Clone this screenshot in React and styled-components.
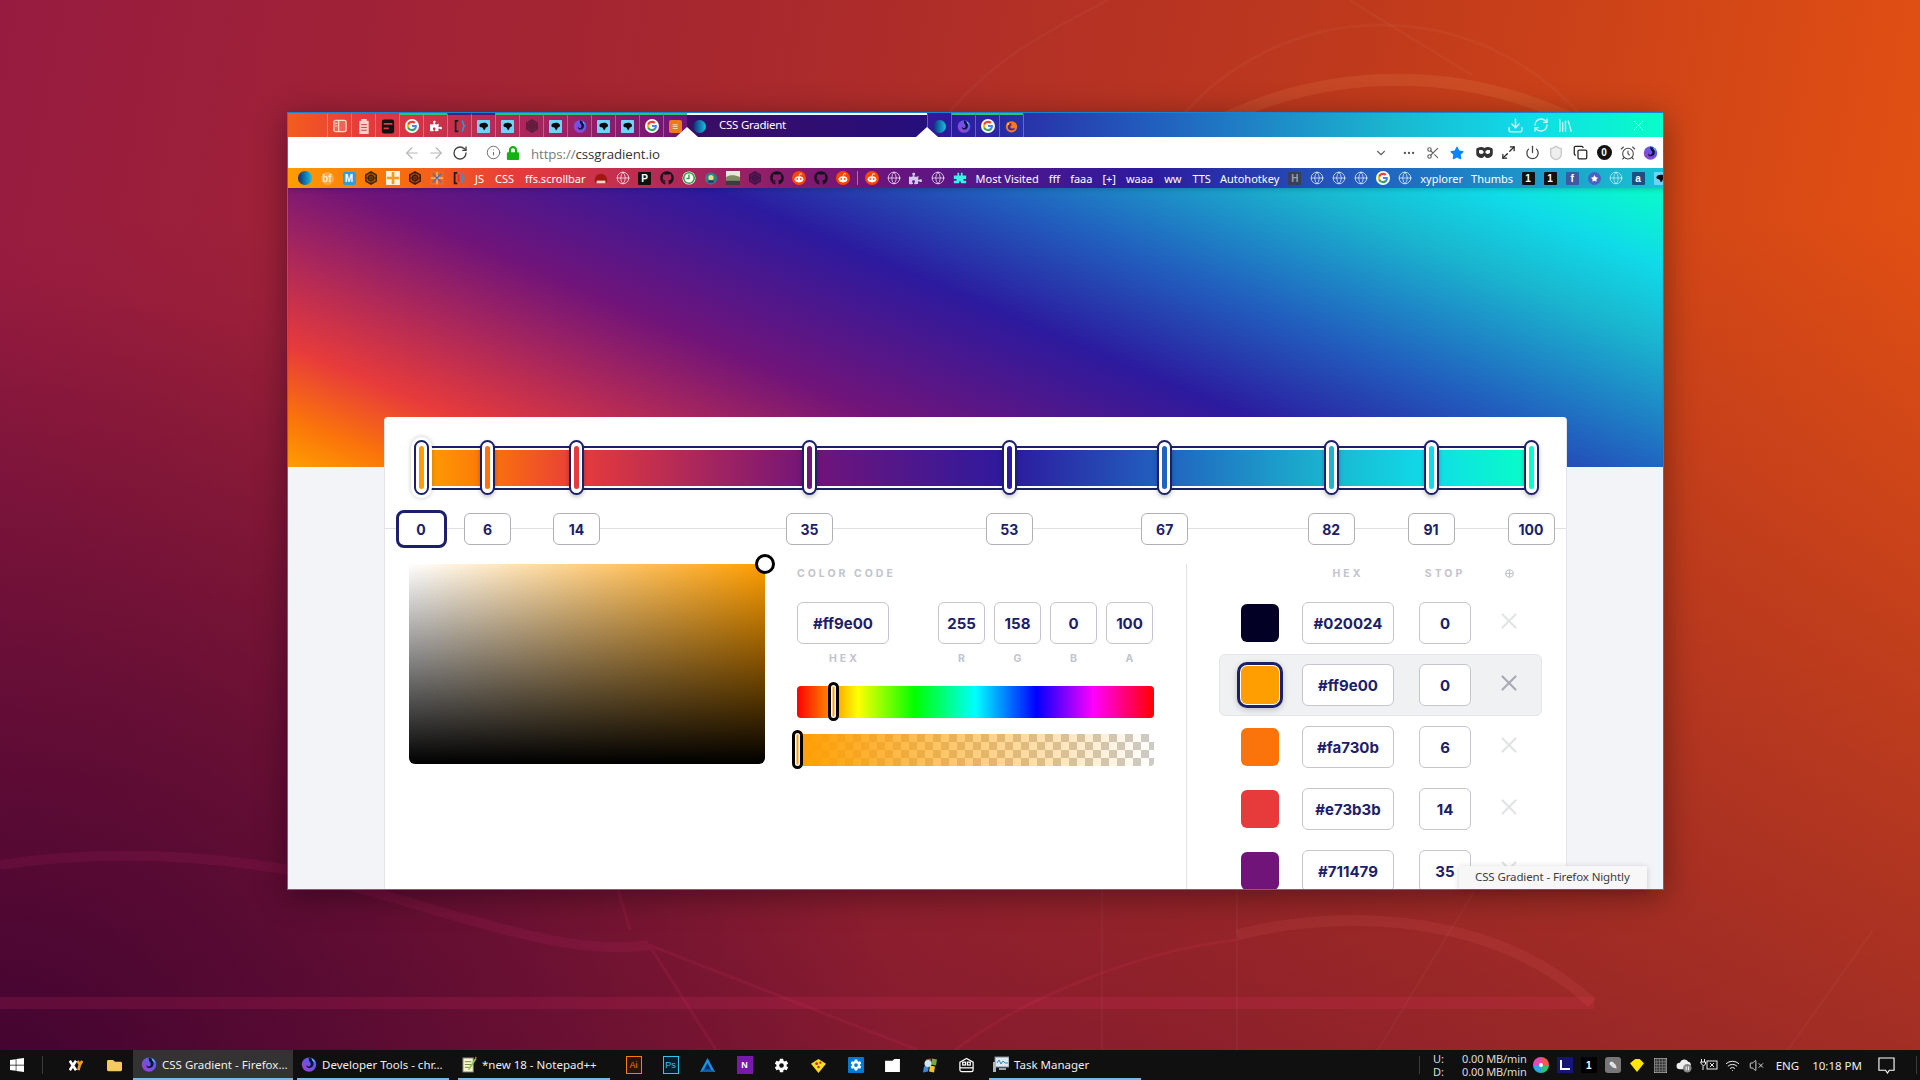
import React from 'react';
import styled, { createGlobalStyle } from 'styled-components';
import {
  AlarmClock, ArrowLeft, ArrowRight, ChevronDown, Copy, Download, Globe, Info, Library,
  Maximize2, MoreHorizontal, Power, RefreshCw, RotateCw, Scissors, Shield, VolumeX, Wifi, X,
} from 'lucide-react';
import { FaFolder, FaGithub, FaLock, FaPuzzlePiece, FaStar, FaWindows } from 'react-icons/fa';
import { IoSettingsSharp } from 'react-icons/io5';

const NAVY = '#1c2068';
const STOPS = [
  [0, '#ff9e00'], [6, '#fa730b'], [14, '#e73b3b'], [35, '#711479'], [53, '#2c1a9e'],
  [67, '#2162bf'], [82, '#1ab6cf'], [91, '#10dbe8'], [100, '#08fdc8'],
];
const stopList = STOPS.map(([p, c]) => `${c} ${p}%`).join(', ');

const GlobalStyle = createGlobalStyle`
  html, body { margin: 0; padding: 0; height: 100%; overflow: hidden; }
  body { font-family: "Inter", "Liberation Sans", sans-serif; }
  * { box-sizing: border-box; }
`;

const Desktop = styled.div`
  position: relative;
  width: 1920px;
  height: 1080px;
  display: flex;
  flex-direction: column;
  overflow: hidden;
  background:
    radial-gradient(ellipse 900px 800px at 0 100%, rgba(48, 0, 44, 0.75), transparent 100%),
    linear-gradient(to bottom, rgba(80, 0, 60, 0) 20%, rgba(80, 0, 60, 0.48) 100%),
    linear-gradient(100deg, #971b40 0%, #a8282e 35%, #bf3a1c 65%, #ea5510 100%);
`;

const Wallpaper = styled.svg`
  position: absolute;
  inset: 0;
`;

const Screen = styled.div`
  position: relative;
  flex: 1;
  min-height: 0;
  padding: 112px 0 0 287px;
`;

const Window = styled.div`
  position: relative;
  width: 1377px;
  height: 778px;
  display: flex;
  flex-direction: column;
  overflow: hidden;
  border: 1px solid #1583d6;
  background: #f3f4f7;
`;

const WindowShadow = styled.div`
  width: 1377px;
  box-shadow: 0 6px 30px rgba(0, 0, 0, 0.4);
`;

const TabBar = styled.div`
  height: 24px;
  flex: none;
  display: flex;
  padding-left: 39px;
  background: linear-gradient(90deg, ${stopList});
  background-size: 110% 100%;
  background-position: right;
`;

const PinnedTab = styled.div`
  width: 24px;
  display: flex;
  align-items: center;
  justify-content: center;
  border-left: 1px solid rgba(255, 255, 255, 0.28);
  border-top: 2px solid ${p => p.$mark || 'transparent'};
`;

const ActiveTab = styled.div`
  position: relative;
  width: 240px;
  display: flex;
  align-items: center;
  gap: 13px;
  padding-left: 6px;
  border-top: 2px solid #fff;
  background: linear-gradient(90deg, #3b0d63, #250f7c);
  color: #fff;
  font: 400 11.5px/18px "Noto Sans", sans-serif;
  letter-spacing: -0.25px;
  span { margin-top: -2px; }
`;

const Notch = styled.i`
  position: absolute;
  bottom: 0;
  left: ${p => (p.$end ? '100%' : '0')};
  margin-left: -11px;
  border-left: 11px solid transparent;
  border-right: 11px solid transparent;
  border-bottom: 10px solid #fff;
`;

const TabBarTools = styled.div`
  margin-left: auto;
  display: flex;
  align-items: center;
  color: #c9f6f4;
  padding-right: 16px;
`;

const ToolSlot = styled.span`
  width: 25px;
  display: flex;
  justify-content: center;
`;

const CloseSlot = styled.span`
  margin-left: 52px;
  display: flex;
  color: #e4fff8;
`;

const UrlBar = styled.div`
  height: 31px;
  flex: none;
  display: flex;
  align-items: center;
  padding-left: 112px;
  background: #fff;
  color: #5a5a5a;
`;

const NavSlot = styled.span`
  width: 24px;
  margin-left: ${p => p.$gap || 0}px;
  display: flex;
  justify-content: center;
  color: ${p => p.$color || '#b8b8b8'};
`;

const UrlText = styled.div`
  margin: 2px 0 0 6px;
  font: 400 13.3px "Open Sans", sans-serif;
  letter-spacing: -0.1px;
  color: #7b7b7b;
  b { font-weight: 400; color: #333; }
`;

const UrlTools = styled.div`
  margin-left: auto;
  padding-right: 3px;
  display: flex;
  align-items: center;
`;

const UrlTool = styled.span`
  width: ${p => p.$w || 24}px;
  margin-right: ${p => p.$after || 0}px;
  display: flex;
  justify-content: center;
  align-items: center;
  color: ${p => p.$color || '#3d3d3d'};
`;

const BookmarkBar = styled.div`
  height: 20px;
  flex: none;
  display: flex;
  align-items: center;
  padding-left: 6px;
  overflow: hidden;
  background: linear-gradient(90deg, ${stopList});
  background-size: 118% 100%;
  background-position: left;
  color: #fff;
  font: 400 11px "Noto Sans", sans-serif;
`;

const BookSlot = styled.span`
  width: ${p => p.$w || 22}px;
  flex: none;
  height: 20px;
  display: flex;
  align-items: center;
  justify-content: center;
  color: ${p => p.$color || '#fff'};
`;

const BookLink = styled.span`
  flex: none;
  padding: 1px ${p => p.$pad ?? 5}px 0;
  white-space: nowrap;
  color: #fff;
`;

const BookSep = styled.span`
  width: 1px;
  height: 14px;
  flex: none;
  margin: 0 3px;
  background: rgba(255, 255, 255, 0.4);
`;

const LetterIcon = styled.span`
  width: ${p => p.$s || 13}px;
  height: ${p => p.$s || 13}px;
  display: flex;
  align-items: center;
  justify-content: center;
  background: ${p => p.$bg || '#111'};
  color: ${p => p.$fg || '#fff'};
  border-radius: ${p => p.$radius || 1}px;
  font: 700 10px "Liberation Sans", sans-serif;
`;

const Page = styled.div`
  flex: 1;
  min-height: 0;
`;

const Hero = styled.div`
  height: 279px;
  background: linear-gradient(23deg, ${stopList});
  box-shadow: inset 0 4px 4px -2px rgba(0, 0, 0, 0.16);
`;

const Panel = styled.div`
  width: 1183px;
  margin: -50px 0 0 96px;
  height: 700px;
  padding-top: 29px;
  position: relative;
  background: #fff;
  border-right: 1px solid #e4e5ea;
  border-left: 1px solid #e4e5ea;
  border-radius: 4px 4px 0 0;
`;

const TrackWrap = styled.div`
  position: relative;
  margin: 0 35px 0 36px;
  height: 44px;
`;

const Track = styled.div`
  height: 100%;
  padding: 2px;
  border: 2px solid ${NAVY};
  background: #fff;
`;

const TrackFill = styled.div`
  height: 100%;
  background: linear-gradient(90deg, ${stopList});
`;

const Thumb = styled.div`
  position: absolute;
  top: -6px;
  width: 15px;
  height: 55px;
  margin-left: -7.5px;
  padding: 4px 3px;
  border: 2px solid ${NAVY};
  border-radius: 8px;
  background: #fff;
  box-shadow: ${p => (p.$active
    ? '0 0 0 3px #fff, 0 0 5px 3px rgba(0, 0, 0, 0.22)'
    : '0 2px 4px rgba(0, 0, 0, 0.25)')};
`;

const ThumbCore = styled.div`
  height: 100%;
  border-radius: 3px;
  background: ${p => p.$color};
`;

const ChipRail = styled.div`
  position: relative;
  height: 31px;
  margin-top: 23px;
  &::before {
    content: '';
    position: absolute;
    left: 0;
    right: 0;
    top: 15px;
    height: 1px;
    background: #dfe0e4;
  }
`;

const ChipTrack = styled.div`
  position: relative;
  height: 100%;
  margin: 0 35px 0 36px;
`;

const Chip = styled.div`
  position: absolute;
  top: ${p => (p.$active ? -3 : 0)}px;
  width: ${p => (p.$active ? 51 : 47)}px;
  height: ${p => (p.$active ? 38 : 32)}px;
  margin-left: ${p => (p.$active ? -25.5 : -23.5)}px;
  display: flex;
  align-items: center;
  justify-content: center;
  border: ${p => (p.$active ? `3px solid ${NAVY}` : '1px solid #b0b1b6')};
  border-radius: ${p => (p.$active ? 8 : 6)}px;
  background: #fff;
  color: ${NAVY};
  font-weight: 700;
  font-size: 14px;
`;

const Body = styled.div`
  display: flex;
  margin-top: 20px;
  padding-left: 24px;
`;

const Picker = styled.div`
  position: relative;
  width: 356px;
  height: 200px;
  flex: none;
  border-radius: 2px 2px 6px 6px;
  background:
    linear-gradient(to top, #000, transparent),
    linear-gradient(to right, #fff, #ff9e00);
`;

const PickerDot = styled.div`
  position: absolute;
  right: -10px;
  top: -10px;
  width: 20px;
  height: 20px;
  border: 3px solid #000;
  border-radius: 50%;
  background: #fff;
`;

const CodeColumn = styled.div`
  width: 357px;
  margin-left: 32px;
  flex: none;
`;

const Caption = styled.div`
  width: ${p => (p.$w ? `${p.$w}px` : 'auto')};
  padding-top: 2px;
  font-size: 10.5px;
  line-height: 16px;
  font-weight: 700;
  letter-spacing: 3px;
  color: #c2c4ce;
  text-align: ${p => p.$align || 'left'};
`;

const CodeFields = styled.div`
  display: flex;
  gap: 9px;
  margin-top: 20px;
`;

const FieldGroup = styled.div`
  width: ${p => p.$w}px;
  margin-right: ${p => p.$gap || 0}px;
`;

const Field = styled.div`
  height: 42px;
  width: ${p => (p.$w ? `${p.$w}px` : 'auto')};
  display: flex;
  align-items: center;
  justify-content: center;
  background: #fff;
  border: 1px solid #c4c5cf;
  border-radius: 6px;
  color: ${NAVY};
  font-weight: 700;
  font-size: 15px;
`;

const FieldLabel = styled(Caption)`
  margin-top: 5px;
  text-align: center;
  padding-left: 3px;
`;

const Bar = styled.div`
  position: relative;
  height: 32px;
  margin-top: ${p => p.$top}px;
  border-radius: 4px;
  background: ${p => p.$bg};
`;

const AlphaBar = styled(Bar)`
  background:
    linear-gradient(90deg, #ff9e00, rgba(255, 158, 0, 0)),
    conic-gradient(#cdcbc6 25%, #fff 0 50%, #cdcbc6 0 75%, #fff 0) 0 0 / 16px 16px;
`;

const BarThumb = styled.div`
  position: absolute;
  top: -4px;
  left: ${p => p.$left}px;
  width: 11px;
  height: 39px;
  padding: 2px;
  border: 3px solid #000;
  border-radius: 6px;
  background: #fff;
  &::after {
    content: '';
    display: block;
    height: 100%;
    width: 1px;
    margin: 0 auto;
    background: #ff9e00;
    box-shadow: 0 0 0 0.5px #ff9e00;
  }
`;

const ListColumn = styled.div`
  flex: none;
  width: 380px;
  height: 500px;
  margin-left: 32px;
  padding-left: 32px;
  border-left: 1px solid #e1e2e6;
`;

const ListHead = styled.div`
  display: grid;
  grid-template-columns: 61px 117px 80px 20px;
  padding-left: 22px;
  height: 28px;
`;

const StopRow = styled.div`
  width: 323px;
  height: 62px;
  display: grid;
  grid-template-columns: 61px 117px 80px 20px;
  align-items: center;
  padding-left: 21px;
  border: 1px solid ${p => (p.$active ? '#e4e5e9' : 'transparent')};
  border-radius: 6px;
  background: ${p => (p.$active ? '#f0f1f3' : 'transparent')};
`;

const Swatch = styled.div`
  width: 38px;
  height: 38px;
  border-radius: 6px;
  background: ${p => p.$color};
  box-shadow: ${p => (p.$active ? `0 0 0 1px #fff, 0 0 0 4px ${NAVY}, 0 2px 6px 4px rgba(0, 0, 0, 0.2)` : 'none')};
`;

const RemoveStop = styled.span`
  display: flex;
  justify-content: center;
  margin: 0 -3px 4px;
  color: ${p => (p.$active ? '#a8aab4' : '#e2e3e7')};
`;

const AddStop = styled.span`
  display: flex;
  justify-content: center;
  padding-top: 5px;
`;

const Tooltip = styled.div`
  position: absolute;
  left: 1459px;
  top: 866px;
  width: 188px;
  height: 23px;
  padding: 3px 0 0 16px;
  background: #f7f7f7;
  box-shadow: 0 1px 6px rgba(0, 0, 0, 0.18);
  color: #3c3c3c;
  font: 400 11.5px "Noto Sans", sans-serif;
  letter-spacing: -0.12px;
  white-space: nowrap;
`;

const Taskbar = styled.div`
  position: relative;
  height: 30px;
  flex: none;
  display: flex;
  align-items: center;
  background: #101010;
  color: #eee;
  font: 400 11.5px "Noto Sans", sans-serif;
`;

const StartSlot = styled.span`
  width: 34px;
  display: flex;
  justify-content: center;
  color: #fff;
`;

const TaskSep = styled.span`
  width: 1px;
  height: 18px;
  flex: none;
  background: #3a3a3a;
  margin: ${p => p.$m || '0'};
`;

const TaskIcon = styled.span`
  width: ${p => p.$w || 37}px;
  height: 30px;
  flex: none;
  margin-left: ${p => p.$gap || 0}px;
  display: flex;
  align-items: center;
  justify-content: center;
  color: ${p => p.$color || '#fff'};
`;

const TaskWindow = styled.div`
  width: ${p => p.$w}px;
  height: 30px;
  flex: none;
  margin-left: ${p => p.$gap || 0}px;
  display: flex;
  align-items: center;
  gap: 5px;
  padding-left: ${p => (p.$active ? 8 : 4)}px;
  white-space: nowrap;
  background: ${p => (p.$active ? '#333' : 'transparent')};
  border-bottom: 2px solid #76b9ed;
`;

const AppBox = styled.span`
  width: 16px;
  height: 18px;
  display: flex;
  align-items: center;
  justify-content: center;
  border: 1px solid ${p => p.$c};
  color: ${p => (p.$solid ? '#fff' : p.$c)};
  background: ${p => p.$bg || 'transparent'};
  font: ${p => (p.$solid ? 700 : 400)} 9px "Liberation Sans", sans-serif;
`;

const Tray = styled.div`
  margin-left: auto;
  display: flex;
  align-items: center;
  height: 100%;
`;

const Meter = styled.div`
  display: grid;
  grid-template-columns: 29px auto;
  margin: 0 2px 0 13px;
  font-size: 11px;
  letter-spacing: -0.1px;
  line-height: 13px;
  color: #ddd;
`;

const TrayIcon = styled.span`
  width: 24px;
  flex: none;
  display: flex;
  justify-content: center;
  color: ${p => p.$color || '#eee'};
`;

const TrayText = styled.span`
  margin-left: ${p => p.$left}px;
  white-space: nowrap;
  font-size: 11.5px;
`;

const NoteIcon = styled.span`
  margin: 0 21px 0 16px;
  display: flex;
  color: #fff;
`;

/* --- drawings --- */

const Orb = ({ s = 13 }) => (
  <svg width={s} height={s} viewBox="0 0 16 16">
    <defs>
      <linearGradient id="orbFill" x1="0" x2="1">
        <stop offset="0" stopColor="#0d2a78" />
        <stop offset="1" stopColor="#18c2e0" />
      </linearGradient>
    </defs>
    <circle cx="8" cy="8" r="8" fill="url(#orbFill)" />
  </svg>
);

const Nightly = ({ s = 14 }) => (
  <svg width={s} height={s} viewBox="0 0 16 16">
    <defs>
      <linearGradient id="nightlyFill" x1="0" y1="1" x2="1" y2="0">
        <stop offset="0" stopColor="#a63ac9" />
        <stop offset="1" stopColor="#3b6cff" />
      </linearGradient>
    </defs>
    <circle cx="8" cy="8.6" r="7.2" fill="url(#nightlyFill)" />
    <path d="M8 1.5c3 1 5 3.6 4.5 7-.4 2.6-3 4-5.2 3.4C5.6 11.4 5 9.6 6 8.4c-.4 1.5 1.2 2.5 2.6 1.8 1.5-.8 1.6-3 .3-4.3C8 5 7.4 3.2 8 1.5z" fill="#12123a" />
    <path d="M11 2.5c1.6 1 2.8 2.6 3 4.4-.7-1-1.5-1.6-2.4-2-.4-.8-.7-1.5-.6-2.4z" fill="#5ac8fa" />
  </svg>
);

const Fox = ({ s = 13 }) => (
  <svg width={s} height={s} viewBox="0 0 16 16">
    <circle cx="8" cy="8.4" r="7" fill="#ff7a18" />
    <path d="M8 3.6a4.6 4.6 0 1 0 4.5 5.6C11 11 7.6 11 6.6 9c-.6-1.3.5-2.6 1.8-2.3C7.6 5.6 7.5 4.5 8 3.6z" fill="#4a2a9a" />
    <path d="M3 3c1 .2 2 1 2.6 2L3.4 7C2.8 5.6 2.6 4.2 3 3z" fill="#ffd23a" />
  </svg>
);

const GoogleG = ({ s = 14 }) => (
  <svg width={s} height={s} viewBox="0 0 24 24">
    <circle cx="12" cy="12" r="12" fill="#fff" />
    <g transform="translate(2.4 2.4) scale(0.8)">
      <path fill="#4285F4" d="M22.56 12.25c0-.78-.07-1.53-.2-2.25H12v4.26h5.92c-.26 1.37-1.04 2.53-2.21 3.31v2.77h3.57c2.08-1.92 3.28-4.74 3.28-8.09z" />
      <path fill="#34A853" d="M12 23c2.97 0 5.46-.98 7.28-2.66l-3.57-2.77c-.98.66-2.23 1.06-3.71 1.06-2.86 0-5.29-1.93-6.16-4.53H2.18v2.84C3.99 20.53 7.7 23 12 23z" />
      <path fill="#FBBC05" d="M5.84 14.09c-.22-.66-.35-1.36-.35-2.09s.13-1.43.35-2.09V7.07H2.18C1.43 8.55 1 10.22 1 12s.43 3.45 1.18 4.93l3.66-2.84z" />
      <path fill="#EA4335" d="M12 5.38c1.62 0 3.06.56 4.21 1.64l3.15-3.15C17.45 2.09 14.97 1 12 1 7.7 1 3.99 3.47 2.18 7.07l3.66 2.84c.87-2.6 3.3-4.53 6.16-4.53z" />
    </g>
  </svg>
);

const CyanBlob = ({ s = 13 }) => (
  <svg width={s} height={s} viewBox="0 0 16 16">
    <rect width="16" height="16" rx="1" fill="#6fd3f5" />
    <path d="M3 6c1-3 9-4 10.5 0 .5 1.5-1 3-2.5 3-.5 1.5-1 3-2.5 3.5C7.5 11 7.5 9.6 6 9 4 9 2.6 7.600 3 6z" fill="#0a0a0a" />
  </svg>
);

const HexTarget = ({ s = 14, c = '#5b1f3d' }) => (
  <svg width={s} height={s} viewBox="0 0 16 16" fill="none" stroke={c} strokeWidth="1.6">
    <path d="M8 1l6 3.500v7L8 15l-6-3.500v-7z" fill="rgba(0,0,0,.28)" />
    <circle cx="8" cy="8" r="3" />
    <path d="M8 1v14M2 8h12" strokeWidth="1" />
  </svg>
);

const Brackets = ({ s = 14 }) => (
  <svg width={s} height={s} viewBox="0 0 16 16" fill="none" strokeWidth="2">
    <path d="M6 2H3v12h3" stroke="#1a1a1a" />
    <path d="M10 2c2 0 1 5 3 6-2 1-1 6-3 6" stroke="#1e9be8" />
    <path d="M7.500 4v8" stroke="#d62b3a" />
  </svg>
);

const BookPane = () => (
  <svg width="14" height="14" viewBox="0 0 16 16" fill="rgba(255,255,255,.18)" stroke="#ffd9d0" strokeWidth="1.4">
    <rect x="1" y="1.500" width="14" height="13" rx="2" />
    <path d="M6.500 1.500v13M2.500 5h2.500M2.500 8h2.500" />
  </svg>
);

const NoteLines = () => (
  <svg width="12" height="15" viewBox="0 0 12 16" fill="#ffd0c8">
    <path d="M1 2h10v14H1z" />
    <path d="M3 0h6v3H3z" />
    <path d="M3 6h6M3 9h6M3 12h6" stroke="#c9364a" strokeWidth="1" />
  </svg>
);

const DarkDb = () => (
  <svg width="14" height="15" viewBox="0 0 16 16">
    <rect x="1" y="0" width="14" height="16" rx="2.500" fill="#111" />
    <path d="M3 4h10v2H3zM3 9h6v2H3z" fill="#e43b4a" />
  </svg>
);

const Speckle = () => (
  <svg width="14" height="14" viewBox="0 0 16 16" fill="#ffb14a">
    <rect width="16" height="16" fill="#f0762c" opacity=".4" />
    <path d="M7 1h2v14H7zM1 7h14v2H1z" />
    <path d="M3 3l10 10M13 3L3 13" stroke="#2d6fd6" strokeWidth="1.4" />
  </svg>
);

const OrangeCross = () => (
  <svg width="14" height="14" viewBox="0 0 16 16">
    <rect width="16" height="16" fill="#fff2dc" />
    <path d="M6.500 1h3v5.500H15v3H9.500V15h-3V9.500H1v-3h5.500z" fill="#f79a1e" />
  </svg>
);

const WixBall = () => (
  <svg width="14" height="14" viewBox="0 0 16 16">
    <path d="M1 10a7 7 0 0 1 14 0v3H1z" fill="#a0180f" />
    <rect x="3" y="11" width="10" height="3" fill="#f4d9c9" />
  </svg>
);

const GreenClock = () => (
  <svg width="14" height="14" viewBox="0 0 16 16" fill="none">
    <circle cx="8" cy="8" r="7.500" fill="#fff" />
    <circle cx="8" cy="8" r="6" stroke="#2e9b3c" strokeWidth="1.800" />
    <path d="M8 4v4.500H5" stroke="#2e9b3c" strokeWidth="1.600" />
  </svg>
);

const RoundBadge = () => (
  <svg width="14" height="15" viewBox="0 0 16 16">
    <circle cx="8" cy="8" r="7" fill="#2f7f8a" />
    <circle cx="8" cy="7" r="3" fill="#e8e07a" />
    <rect x="5" y="10" width="6" height="3" fill="#1f3f6e" />
  </svg>
);

const Thumbnail = () => (
  <svg width="14" height="14" viewBox="0 0 16 16">
    <rect width="16" height="16" fill="#e8e8da" />
    <path d="M0 7c4-3 10-3 16 0v4H0z" fill="#7f8a62" />
    <rect y="11" width="16" height="5" fill="#3c3c3c" />
  </svg>
);

const CyanPuzzle = () => (
  <svg width="14" height="14" viewBox="0 0 16 16" fill="#3bf0e4">
    <path d="M1 5h4V2h2v3h2V2h2v3h4v4h-3v2h3v3H9v-2H7v2H1v-3h3V9H1z" />
  </svg>
);

const RedditDot = () => (
  <svg width="14" height="14" viewBox="0 0 16 16">
    <circle cx="8" cy="8" r="8" fill="#ff4500" />
    <ellipse cx="8" cy="9.500" rx="5" ry="3.500" fill="#fff" />
    <circle cx="6" cy="9" r="1" fill="#ff4500" />
    <circle cx="10" cy="9" r="1" fill="#ff4500" />
    <path d="M8 6l1-3 2.500.6" stroke="#fff" fill="none" />
  </svg>
);

const PaleGlobe = ({ s = 14, c = 'rgba(255,255,255,.72)' }) => <Globe size={s} color={c} strokeWidth={1.6} />;

const XyIcon = () => (
  <svg width="14" height="13" viewBox="0 0 18 16" fill="none" strokeWidth="3.500">
    <path d="M1 2l8 12M9 2L1 14" stroke="#fff" />
    <path d="M11 2l3 5 3-5M14 7l-2 7" stroke="#f59a23" />
  </svg>
);

const NotepadIcon = () => (
  <svg width="15" height="17" viewBox="0 0 16 18">
    <rect x="1" y="2" width="11" height="15" fill="#f7f4cf" stroke="#777" />
    <path d="M3 6h7M3 9h7M3 12h5" stroke="#6c8a3a" />
    <path d="M7 13l7-11 1.500 1-7 11-2 1z" fill="#8cc63f" />
    <path d="M13.500 1.500l1-1 1.500 1-.7 1.200z" fill="#d84a3a" />
  </svg>
);

const AtlasTriangle = () => (
  <svg width="15" height="15" viewBox="0 0 16 16">
    <path d="M8 0l8 15H0z" fill="#1593e6" />
    <path d="M8 5l4 8H4z" fill="#0b2f6b" />
    <path d="M0 15l5-3h6l5 3z" fill="#0c5da8" />
  </svg>
);

const PizzaIcon = () => (
  <svg width="15" height="15" viewBox="0 0 16 16">
    <path d="M0 6l8-5 8 5-8 10z" fill="#f4de23" />
    <circle cx="6" cy="6" r="1.500" fill="#c92a1e" />
    <circle cx="10" cy="5" r="1.200" fill="#c92a1e" />
    <circle cx="8" cy="9.500" r="1.300" fill="#c92a1e" />
  </svg>
);

const FlatFolder = () => (
  <svg width="15" height="13" viewBox="0 0 16 14" fill="#fff">
    <path d="M0 2h8l2-2h6v14H0z" />
  </svg>
);

const XpFlag = () => (
  <svg width="16" height="17" viewBox="0 0 16 16">
    <path d="M4 2l5-1-1 6-5 1z" fill="#d9542b" />
    <path d="M10 1l5 1-1 6-5-1z" fill="#7aa83a" />
    <path d="M2 9l5-1-1 6-5 1z" fill="#3f86d9" />
    <path d="M8 8l5 1-1 6-5-1z" fill="#f0c330" />
    <circle cx="6" cy="6" r="3.500" fill="#cde6f7" />
  </svg>
);

const RobotIcon = () => (
  <svg width="17" height="16" viewBox="0 0 18 16" fill="none" stroke="#fff" strokeWidth="1.300">
    <path d="M2 5l7-4 7 4v8a2 2 0 0 1-2 2H4a2 2 0 0 1-2-2z" />
    <path d="M2 11h14" />
    <rect x="5" y="5" width="3" height="3" />
    <rect x="10" y="5" width="3" height="3" />
  </svg>
);

const Monitor = () => (
  <svg width="16" height="16" viewBox="0 0 16 16">
    <rect x="2" y="1" width="14" height="10" fill="#dfeaf2" stroke="#7c8a96" />
    <path d="M4 7l2-3 2 4 2-3 2 2h3" stroke="#2a86c8" fill="none" />
    <rect x="0" y="6" width="3" height="10" fill="#aab4bc" />
    <rect x="6" y="12" width="7" height="2" fill="#9aa4ac" />
  </svg>
);

const ColorWheel = () => (
  <svg width="16" height="16" viewBox="0 0 16 16">
    <path d="M8 8V0a8 8 0 0 1 8 8z" fill="#f1594a" />
    <path d="M8 8h8a8 8 0 0 1-8 8z" fill="#2fc26d" />
    <path d="M8 8v8a8 8 0 0 1-8-8z" fill="#2aa7e8" />
    <path d="M8 8H0a8 8 0 0 1 8-8z" fill="#e64ab0" />
    <circle cx="8" cy="8" r="2" fill="#fff" />
  </svg>
);

const ChartL = () => (
  <svg width="16" height="16" viewBox="0 0 16 16">
    <rect width="16" height="16" fill="#14147a" />
    <path d="M4 3v9h9" stroke="#fff" strokeWidth="2" fill="none" />
  </svg>
);

const Grid = () => (
  <svg width="13" height="15" viewBox="0 0 14 16">
    <rect width="14" height="16" fill="#333" stroke="#ddd" />
    <path d="M3 1v14M6 1v14M9 1v14M12 1v14M1 4h12M1 7h12M1 10h12M1 13h12" stroke="#888" strokeWidth=".7" />
  </svg>
);

const CloudPause = () => (
  <svg width="17" height="15" viewBox="0 0 18 16">
    <path d="M4 12a3.500 3.500 0 0 1 0-7 5 5 0 0 1 9-1 3 3 0 0 1 2 5H9v3z" fill="#eee" />
    <circle cx="12" cy="11" r="4.500" fill="#888" />
    <path d="M10.800 9v4M13.200 9v4" stroke="#fff" />
  </svg>
);

const Plug = () => (
  <svg width="18" height="14" viewBox="0 0 18 14" fill="none" stroke="#eee">
    <path d="M1.500 1v3M4.500 1v3M0.500 4h5v2l-2 2-2-2zM3 8v4" />
    <rect x="7" y="3" width="10" height="8" />
    <path d="M10 5l4 4M14 5l-4 4" />
  </svg>
);

const Callout = () => (
  <svg width="17" height="17" viewBox="0 0 18 18" fill="none" stroke="#fff" strokeWidth="1.200">
    <path d="M1 1h16v13h-5l-2 3-2-3H1z" />
  </svg>
);

const AddMark = () => (
  <svg width="9" height="9" viewBox="0 0 10 10" fill="none" stroke="#c2c4ce" strokeWidth="1.300">
    <circle cx="5" cy="5" r="4.200" />
    <path d="M5 1v8M1 5h8" />
  </svg>
);

const MaskGlyph = () => (
  <svg width="17" height="11" viewBox="0 0 18 12" fill="#333">
    <path fillRule="evenodd" d="M0 3c0-2 3-3 6-3 2 0 2 1 3 1s1-1 3-1c3 0 6 1 6 3v4c0 3-3 5-6 5-2 0-2-2-3-2s-1 2-3 2c-3 0-6-2-6-5zm3 1v2c0 2 5 2 5 0V5C7 3 3 3 3 4zm12 0c0-1-4-1-5 1v1c0 2 5 2 5 0z" />
  </svg>
);

const Wave = () => (
  <Wallpaper width="1920" height="1080" viewBox="0 0 1920 1080" fill="none" stroke="rgba(255,255,255,0.035)">
    <path d="M1225 118A408 408 0 0 1 1570 118" strokeWidth="12" stroke="rgba(255,190,120,0.11)" />
    <path d="M1180 118A265 265 0 0 1 1583 118" strokeWidth="3" />
    <path d="M1108 0C1050 30 990 60 945 118M1349 0L1472 75" strokeWidth="2.500" />
    <path d="M0 1003H1594" strokeWidth="12" stroke="rgba(255,50,110,0.14)" />
    <path d="M1237 935C1310 915 1480 900 1592 1003" strokeWidth="11" stroke="rgba(255,120,120,0.1)" />
    <path d="M0 865C100 850 200 855 290 870C420 900 560 960 649 945" strokeWidth="10" stroke="rgba(255,50,140,0.09)" />
    <path d="M618 890L630 930M649 945L716 1050M649 945L918 1050M955 1050C1020 1000 1140 950 1237 940" strokeWidth="3" stroke="rgba(255,60,120,0.1)" />
    <path d="M1237 890V1050M1102 890V1050M1475 890L1378 1050M1873 930L1788 1050" strokeWidth="2" />
  </Wallpaper>
);

/* --- data --- */

const GREEN = '#2fc36a';
const DIM = '#4a1f7a';
const leftTabs = [
  [<BookPane />], [<NoteLines />], [<DarkDb />], [<GoogleG />, GREEN], [<FaPuzzlePiece size={12} color="#fff" />, GREEN],
  [<Brackets />, DIM], [<CyanBlob />, DIM], [<CyanBlob />, GREEN], [<HexTarget />, GREEN], [<CyanBlob />, GREEN],
  [<Nightly />, GREEN], [<CyanBlob />, GREEN], [<CyanBlob />, GREEN], [<GoogleG />, GREEN],
  [<LetterIcon $bg="#ec7a1c" $fg="#ffe9c8" $radius={2}>≡</LetterIcon>, GREEN],
];
const rightTabs = [[<Orb />], [<Nightly />, GREEN], [<GoogleG />, GREEN], [<Fox />, GREEN]];

const L = (t, bg, fg, r) => <LetterIcon $bg={bg} $fg={fg} $radius={r}>{t}</LetterIcon>;
const gh = <FaGithub size={14} color="#15121c" />;
const bookmarks = [
  { i: <Orb s={14} /> }, { i: L('bf', 'rgba(255,255,255,.25)', '#ffe8c9', 7) }, { i: L('M', '#2a9fe0', '#fff', 2) },
  { i: <HexTarget c="#3a2408" /> }, { i: <OrangeCross /> }, { i: <HexTarget c="#3a1a14" /> }, { i: <Speckle /> },
  { i: <Brackets /> },
  { t: 'JS', pad: 5 }, { t: 'CSS', pad: 6 }, { t: 'ffs.scrollbar', pad: 5 },
  { i: <WixBall />, w: 21 }, { i: <PaleGlobe /> }, { i: L('P', '#111', '#fff', 0) }, { i: gh }, { i: <GreenClock /> },
  { i: <RoundBadge /> }, { i: <Thumbnail /> }, { i: <HexTarget c="#3c1450" /> }, { i: gh }, { i: <RedditDot /> },
  { i: gh }, { i: <RedditDot /> }, { sep: true }, { i: <RedditDot /> }, { i: <PaleGlobe /> },
  { i: <FaPuzzlePiece size={13} color="#d3c8ee" /> }, { i: <PaleGlobe /> }, { i: <CyanPuzzle /> },
  { t: 'Most Visited', pad: 5 }, { t: 'fff', pad: 5 }, { t: 'faaa', pad: 5 }, { t: '[+]', pad: 5 }, { t: 'waaa', pad: 5 },
  { t: 'ww', pad: 6 }, { t: 'TTS', pad: 5 }, { t: 'Autohotkey', pad: 4 },
  { i: L('H', '#3b3f56', '#9a9cb0', 1), w: 23 }, { i: <PaleGlobe /> }, { i: <PaleGlobe /> }, { i: <PaleGlobe /> },
  { i: <GoogleG /> }, { i: <PaleGlobe /> },
  { t: 'xyplorer', pad: 4 }, { t: 'Thumbs', pad: 4 },
  { i: L('1', '#111', '#fff', 0) }, { i: L('1', '#111', '#fff', 0) }, { i: L('f', '#3b5ba5', '#fff', 0) },
  { i: <LetterIcon $bg="#4b62c2" $fg="#fff" $radius={7}><FaStar size={7} /></LetterIcon> },
  { i: <PaleGlobe c="rgba(255,255,255,.6)" /> }, { i: L('a', '#1b4f82', '#fff', 0) }, { i: <CyanBlob /> },
];

const rows = [
  ['#020024', 0], ['#ff9e00', 0, true], ['#fa730b', 6], ['#e73b3b', 14], ['#711479', 35],
];

const rgbaFields = [['255', 'R'], ['158', 'G'], ['0', 'B'], ['100', 'A']];

const App = () => (
  <Desktop>
    <GlobalStyle />
    <Wave />
    <Screen>
      <WindowShadow>
        <Window>
          <TabBar>
            {leftTabs.map(([icon, mark], i) => <PinnedTab key={i} $mark={mark}>{icon}</PinnedTab>)}
            <ActiveTab>
              <Orb />
              <span>CSS Gradient</span>
              <Notch />
              <Notch $end />
            </ActiveTab>
            {rightTabs.map(([icon, mark], i) => <PinnedTab key={i} $mark={mark}>{icon}</PinnedTab>)}
            <PinnedTab />
            <TabBarTools>
              <ToolSlot><Download size={17} /></ToolSlot>
              <ToolSlot><RefreshCw size={16} /></ToolSlot>
              <ToolSlot><Library size={17} /></ToolSlot>
              <CloseSlot><X size={17} strokeWidth={1.1} /></CloseSlot>
            </TabBarTools>
          </TabBar>

          <UrlBar>
            <NavSlot><ArrowLeft size={18} strokeWidth={1.6} /></NavSlot>
            <NavSlot><ArrowRight size={18} strokeWidth={1.6} /></NavSlot>
            <NavSlot $color="#444"><RotateCw size={16} strokeWidth={2} /></NavSlot>
            <NavSlot $color="#666" $gap={9}><Info size={15} strokeWidth={1.5} /></NavSlot>
            <NavSlot $color="#12b312" $gap={-4}><FaLock size={14} /></NavSlot>
            <UrlText>https://<b>cssgradient.io</b></UrlText>
            <UrlTools>
              <UrlTool $color="#666" $after={4}><ChevronDown size={14} /></UrlTool>
              <UrlTool $color="#555"><MoreHorizontal size={14} /></UrlTool>
              <UrlTool $color="#666"><Scissors size={14} /></UrlTool>
              <UrlTool $color="#0a84ff" $after={3}><FaStar size={14} /></UrlTool>
              <UrlTool><MaskGlyph /></UrlTool>
              <UrlTool $color="#222"><Maximize2 size={15} /></UrlTool>
              <UrlTool $color="#444"><Power size={15} /></UrlTool>
              <UrlTool $color="#c7c7c7"><Shield size={16} fill="#eeeeee" /></UrlTool>
              <UrlTool $color="#222"><Copy size={15} /></UrlTool>
              <UrlTool><LetterIcon $s={15} $bg="#111" $fg="#fff" $radius={8}>0</LetterIcon></UrlTool>
              <UrlTool $color="#444"><AlarmClock size={16} strokeWidth={1.6} /></UrlTool>
              <UrlTool $w={20}><Nightly s={15} /></UrlTool>
            </UrlTools>
          </UrlBar>

          <BookmarkBar>
            {bookmarks.map((b, i) => {
              if (b.sep) return <BookSep key={i} />;
              if (b.t) return <BookLink key={i} $pad={b.pad}>{b.t}</BookLink>;
              return <BookSlot key={i} $w={b.w}>{b.i}</BookSlot>;
            })}
          </BookmarkBar>

          <Page>
            <Hero />
            <Panel>
              <TrackWrap>
                <Track><TrackFill /></Track>
                {STOPS.map(([p, c], i) => (
                  <Thumb key={p} $active={i === 0} style={{ left: `${p}%` }}><ThumbCore $color={c} /></Thumb>
                ))}
              </TrackWrap>
              <ChipRail>
                <ChipTrack>
                  {STOPS.map(([p], i) => <Chip key={p} $active={i === 0} style={{ left: `${p}%` }}>{p}</Chip>)}
                </ChipTrack>
              </ChipRail>

              <Body>
                <Picker><PickerDot /></Picker>

                <CodeColumn>
                  <Caption>COLOR CODE</Caption>
                  <CodeFields>
                    <FieldGroup $w={92} $gap={40}>
                      <Field>#ff9e00</Field>
                      <FieldLabel>HEX</FieldLabel>
                    </FieldGroup>
                    {rgbaFields.map(([v, l]) => (
                      <FieldGroup key={l} $w={47}>
                        <Field>{v}</Field>
                        <FieldLabel>{l}</FieldLabel>
                      </FieldGroup>
                    ))}
                  </CodeFields>
                  <Bar $top={19} $bg="linear-gradient(90deg, #f00, #ff0 17%, #0f0 33%, #0ff 50%, #00f 67%, #f0f 83%, #f00)">
                    <BarThumb $left={31} />
                  </Bar>
                  <AlphaBar $top={16}>
                    <BarThumb $left={-5} />
                  </AlphaBar>
                </CodeColumn>

                <ListColumn>
                  <ListHead>
                    <span />
                    <Caption $align="center" $w={92}>HEX</Caption>
                    <Caption $align="center" $w={52}>STOP</Caption>
                    <AddStop><AddMark /></AddStop>
                  </ListHead>
                  {rows.map(([hex, stop, active]) => (
                    <StopRow key={hex} $active={active}>
                      <Swatch $color={hex} $active={active} />
                      <Field $w={92}>{hex}</Field>
                      <Field $w={52}>{stop}</Field>
                      <RemoveStop $active={active}><X size={26} strokeWidth={2} /></RemoveStop>
                    </StopRow>
                  ))}
                </ListColumn>
              </Body>
            </Panel>
          </Page>
        </Window>
      </WindowShadow>
      <Tooltip>CSS Gradient - Firefox Nightly</Tooltip>
    </Screen>

    <Taskbar>
      <StartSlot><FaWindows size={16} /></StartSlot>
      <TaskSep $m="0 14px 0 8px" />
      <TaskIcon $w={38}><XyIcon /></TaskIcon>
      <TaskIcon $w={38} $color="#f4c95d"><FaFolder size={15} /></TaskIcon>
      <TaskWindow $w={160} $active><Nightly s={16} />CSS Gradient - Firefox...</TaskWindow>
      <TaskWindow $w={152} $gap={4}><Nightly s={16} />Developer Tools - chr...</TaskWindow>
      <TaskWindow $w={152} $gap={9}><NotepadIcon />*new 18 - Notepad++</TaskWindow>
      <TaskIcon $gap={5}><AppBox $c="#ff7c00" $bg="#2a1400">Ai</AppBox></TaskIcon>
      <TaskIcon><AppBox $c="#31c5f0" $bg="#001e2b">Ps</AppBox></TaskIcon>
      <TaskIcon><AtlasTriangle /></TaskIcon>
      <TaskIcon><AppBox $c="#7719aa" $bg="#7719aa" $solid>N</AppBox></TaskIcon>
      <TaskIcon><IoSettingsSharp size={15} /></TaskIcon>
      <TaskIcon><PizzaIcon /></TaskIcon>
      <TaskIcon><LetterIcon $s={16} $bg="#0078d7" $radius={0}><IoSettingsSharp size={12} /></LetterIcon></TaskIcon>
      <TaskIcon><FlatFolder /></TaskIcon>
      <TaskIcon><XpFlag /></TaskIcon>
      <TaskIcon><RobotIcon /></TaskIcon>
      <TaskWindow $w={152} $gap={4}><Monitor />Task Manager</TaskWindow>
      <Tray>
        <TaskSep />
        <Meter>
          <span>U:</span><span>0.00 MB/min</span>
          <span>D:</span><span>0.00 MB/min</span>
        </Meter>
        <TrayIcon><ColorWheel /></TrayIcon>
        <TrayIcon><ChartL /></TrayIcon>
        <TrayIcon><LetterIcon $s={16} $bg="#000" $fg="#fff">1</LetterIcon></TrayIcon>
        <TrayIcon><LetterIcon $s={16} $bg="#777" $fg="#eee" $radius={3}>✎</LetterIcon></TrayIcon>
        <TrayIcon><svg width="14" height="14" viewBox="0 0 16 16" fill="#ffe600"><path d="M0 6l6-5h5l5 5-8 10z" /></svg></TrayIcon>
        <TrayIcon><Grid /></TrayIcon>
        <TrayIcon><CloudPause /></TrayIcon>
        <TrayIcon><Plug /></TrayIcon>
        <TrayIcon><Wifi size={15} strokeWidth={1.6} /></TrayIcon>
        <TrayIcon><VolumeX size={15} strokeWidth={1.4} /></TrayIcon>
        <TrayText $left={7}>ENG</TrayText>
        <TrayText $left={13}>10:18 PM</TrayText>
        <NoteIcon><Callout /></NoteIcon>
        <TaskSep $m="0 3px 0 0" />
      </Tray>
    </Taskbar>
  </Desktop>
);

export default App;
